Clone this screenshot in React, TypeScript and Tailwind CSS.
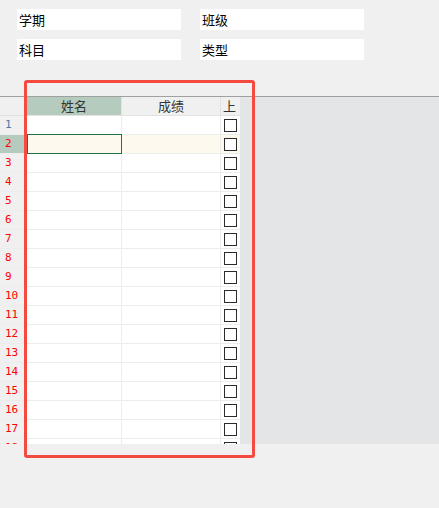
import React from "react";

const ROWS = Array.from({ length: 18 }, (_, i) => i + 1);

function Field({ label }: { label: string }) {
  return (
    <div className="h-[21px] bg-white pl-[2px] text-[13px] leading-[21px] text-black">
      {label}
    </div>
  );
}

function CheckBox() {
  return <div className="h-[13px] w-[13px] border border-[#2b2b2b] bg-white" />;
}

export default function App() {
  return (
    <div
      className="relative h-[508px] w-[439px] overflow-hidden bg-[#f0f0f0]"
      style={{ fontFamily: '"Noto Sans CJK SC", "Noto Sans", sans-serif' }}
    >
      {/* Filter fields */}
      <div className="grid grid-cols-[164px_164px] gap-x-[19px] gap-y-[9px] pl-[17px] pt-[9px]">
        <Field label="学期" />
        <Field label="班级" />
        <Field label="科目" />
        <Field label="类型" />
      </div>

      {/* Grid */}
      <div className="mt-[36px] flex h-[348px] border-t border-[#a0a0a0] bg-[#f0f0f0]">
        <div className="flex h-full w-[240px] flex-col overflow-hidden bg-white">
          {/* header */}
          <div className="flex h-[19px] shrink-0 border-b border-[#e2e2e2] text-[13px] leading-[18px] text-[#333]">
            <div className="w-[27px] border-r border-[#e2e2e2] bg-[#f0f0f0]" />
            <div className="w-[95px] border-r border-[#e2e2e2] bg-[#b5cbbd] text-center">姓名</div>
            <div className="w-[99px] border-r border-[#e2e2e2] bg-[#f0f0f0] text-center">成绩</div>
            <div className="w-[19px] bg-[#f0f0f0] pl-[2px]">上</div>
          </div>
          {ROWS.map((n) => {
            const sel = n === 2;
            return (
              <div key={n} className="flex h-[19px] shrink-0 border-b border-[#ececec]">
                <div
                  className={`w-[27px] border-r border-[#e2e2e2] pl-[5px] text-[11px] leading-[18px] ${
                    sel ? "bg-[#b5cbbd]" : "bg-[#f0f0f0]"
                  } ${n === 1 ? "text-[#4a78a8]" : "text-[#ff0000]"}`}
                  style={{ fontFamily: '"DejaVu Sans Mono", monospace' }}
                >
                  {n}
                </div>
                <div
                  className={`w-[95px] border-r ${
                    sel ? "-mt-px h-[20px] border border-[#217346] bg-[#fdf9ee]" : "border-[#ececec]"
                  }`}
                />
                <div className={`w-[99px] border-r border-[#ececec] ${sel ? "bg-[#fdf9ee]" : ""}`} />
                <div className={`flex w-[19px] items-center pl-[3px] ${sel ? "bg-[#fdf9ee]" : ""}`}>
                  <CheckBox />
                </div>
              </div>
            );
          })}
        </div>
        <div className="h-full flex-1 bg-[#e4e5e7]" />
      </div>

      {/* Annotation frame */}
      <div className="absolute left-[24px] top-[80px] h-[378px] w-[231px] rounded-[3px] border-[3px] border-[#f44a3f]" />
    </div>
  );
}
